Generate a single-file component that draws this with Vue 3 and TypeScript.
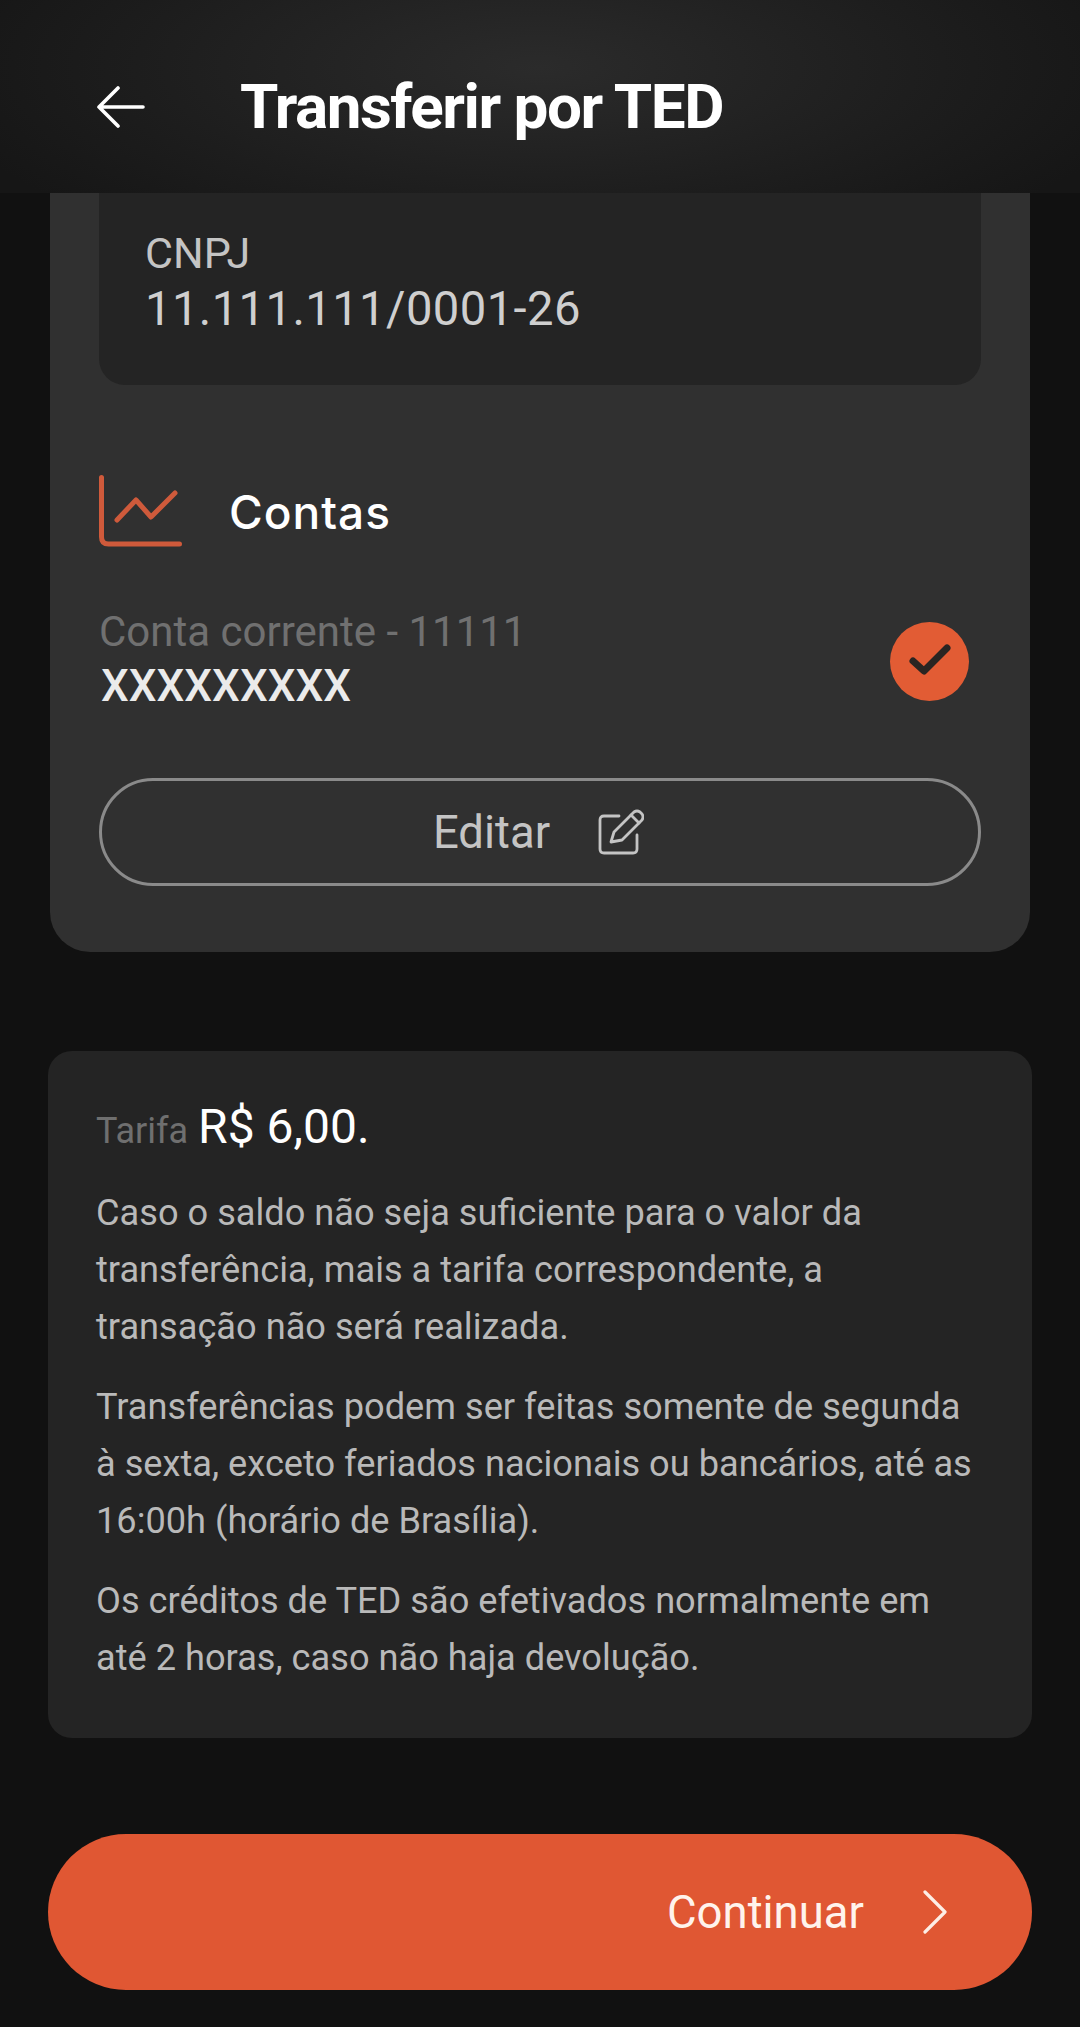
<script setup lang="ts">
const notes = [
  'Caso o saldo não seja suficiente para o valor da transferência, mais a tarifa correspondente, a transação não será realizada.',
  'Transferências podem ser feitas somente de segunda à sexta, exceto feriados nacionais ou bancários, até as 16:00h (horário de Brasília).',
  'Os créditos de TED são efetivados normalmente em até 2 horas, caso não haja devolução.',
]
</script>

<template>
  <div class="screen">
    <header class="top-bar">
      <svg class="back" viewBox="0 0 48 42" fill="none" stroke="#fff" stroke-width="3.6" stroke-linecap="round" stroke-linejoin="round">
        <path d="M46 21H2M21 2 2 21l19 19" />
      </svg>
      <h1>Transferir por TED</h1>
    </header>

    <section class="account-card">
      <div class="company">
        <span class="company-label">CNPJ</span>
        <span class="company-value">11.111.111/0001-26</span>
      </div>

      <div class="section-title">
        <svg class="chart" viewBox="0 0 84 72" fill="none" stroke="#cf5a3b" stroke-width="5" stroke-linecap="round" stroke-linejoin="round">
          <path d="M2.5 2.5V62q0 7 7 7h71" />
          <path d="M18 45 37 25l15 17 24-24" />
        </svg>
        <h2>Contas</h2>
      </div>

      <div class="account-row">
        <div class="account-info">
          <span class="account-type">Conta corrente - 11111</span>
          <span class="account-name">XXXXXXXXX</span>
        </div>
        <span class="check">
          <svg viewBox="0 0 44 36" fill="none" stroke="#2a2522" stroke-width="7" stroke-linecap="round" stroke-linejoin="round">
            <path d="M5 18l11 10L39 5" />
          </svg>
        </span>
      </div>

      <button class="edit-btn">
        <span>Editar</span>
        <svg viewBox="0 0 46 46" fill="none" stroke="#c4c4c4" stroke-width="2.8" stroke-linecap="round" stroke-linejoin="round">
          <path d="M21 7H6q-4 0-4 4v29q0 4 4 4h29q4 0 4-4V26" />
          <path d="M13 33l3-10L36 3q3-2 6 0l2 2q2 3 0 6L24 31z" />
          <path d="M33 6l8 8" />
        </svg>
      </button>
    </section>

    <section class="info-card">
      <p class="fee"><span class="fee-label">Tarifa</span> <span class="fee-value">R$ 6,00.</span></p>
      <p v-for="note in notes" :key="note" class="note">{{ note }}</p>
    </section>

    <button class="continue-btn">
      <span>Continuar</span>
      <svg viewBox="0 0 24 44" fill="none" stroke="#fdeee6" stroke-width="3.2" stroke-linecap="round" stroke-linejoin="round">
        <path d="M2 2l20 20L2 42" />
      </svg>
    </button>
  </div>
</template>

<style scoped>
.screen {
  width: 1080px; height: 2027px; overflow: hidden;
  background: #111111; color: #fff;
  font-family: Roboto, "Liberation Sans", sans-serif;
}

.top-bar {
  height: 193px; box-sizing: border-box; padding: 0 0 0 97px;
  display: flex; align-items: center; gap: 95px;
  background: radial-gradient(ellipse 620px 210px at 50% 35%, #2b2b2b 0%, #1d1d1d 65%, #161616 100%);
}
.back { width: 48px; height: 42px; flex-shrink: 0; margin-top: 20px; }
.top-bar h1 {
  margin: 20px 0 0; font-size: 62px; font-weight: 700; line-height: 1; letter-spacing: -1.5px;
}

.account-card {
  width: 980px; margin: 0 auto; box-sizing: border-box; height: 759px;
  padding: 0 49px; background: #303030; border-radius: 0 0 40px 40px;
}
.company {
  height: 192px; box-sizing: border-box; padding: 35px 46px 0;
  display: flex; flex-direction: column;
  background: #242424; border-radius: 0 0 26px 26px;
}
.company-label { font-size: 43px; line-height: 50px; color: #c4c4c4; }
.company-value { font-size: 47.2px; line-height: 58px; margin-top: 2px; color: #cfcfcf; letter-spacing: 0.4px; }

.section-title { display: flex; align-items: center; gap: 46px; margin-top: 90px; }
.chart { width: 84px; height: 72px; flex-shrink: 0; }
.section-title h2 {
  margin: 2px 0 0; font-family: Inter, sans-serif; font-size: 46px; font-weight: 500; line-height: 1; letter-spacing: 1px;
}

.account-row { display: flex; align-items: center; justify-content: space-between; margin-top: 61px; padding-right: 12px; }
.account-info { display: flex; flex-direction: column; }
.account-type { font-size: 42px; line-height: 48px; color: #707070; }
.account-name { font-size: 44px; line-height: 60px; font-weight: 500; color: #ebebeb; margin-left: 2px; }
.check {
  width: 79px; height: 79px; border-radius: 50%; background: #e25c34; margin-top: -2px;
  display: flex; align-items: center; justify-content: center;
}
.check svg { width: 44px; height: 36px; }

.edit-btn {
  width: 100%; height: 108px; margin-top: 62px; padding: 0 3px 0 0;
  display: flex; align-items: center; justify-content: center; gap: 48px;
  background: transparent; border: 3px solid #8a8a8a; border-radius: 54px;
  color: #c4c4c4; font-family: inherit; font-size: 45.5px;
}
.edit-btn svg { width: 46px; height: 46px; }

.info-card {
  margin: 99px 48px 0; height: 687px; box-sizing: border-box; padding: 48px 60px 0 48px;
  background: #242424; border-radius: 24px;
}
.info-card p { margin: 0; }
.fee { font-size: 36px; line-height: 56px; }
.fee-label { color: #6f6f6f; }
.fee-value { font-size: 48px; color: #fff; margin-left: 1px; }
.note { font-size: 36.2px; line-height: 57px; color: #b9b9b9; margin-top: 23px !important; }
.fee + .note { margin-top: 25px !important; }

.continue-btn {
  width: 984px; height: 156px; margin: 96px 48px 0; padding: 0 85px 0 0;
  display: flex; align-items: center; justify-content: flex-end; gap: 59px;
  background: #e05733; border: none; border-radius: 78px;
  color: #fff3ec; font-family: inherit; font-size: 45.5px;
}
.continue-btn svg { width: 24px; height: 44px; }
</style>

<style>
html, body { margin: 0; background: #111111; }
</style>
